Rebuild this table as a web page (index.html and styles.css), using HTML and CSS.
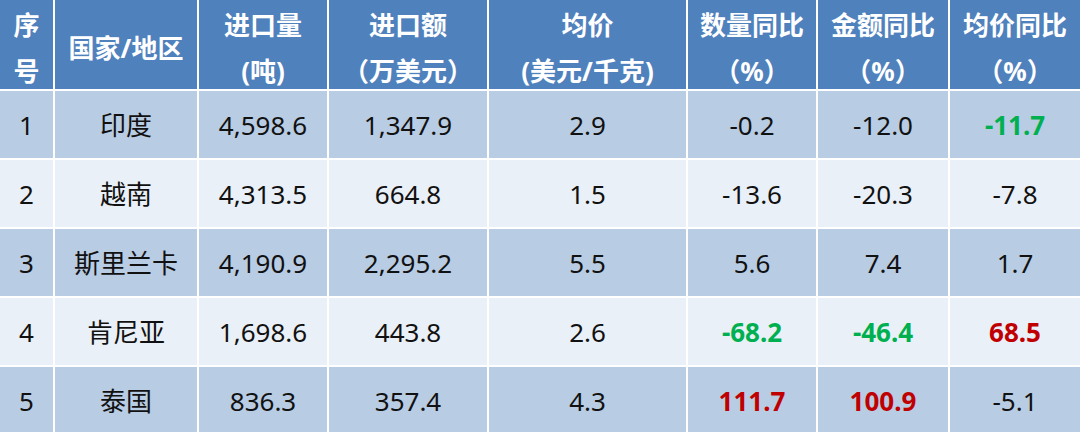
FILE: index.html
```html
<!DOCTYPE html>
<html lang="zh">
<head>
<meta charset="utf-8">
<link rel="stylesheet" href="styles.css">
</head>
<body>
<div class="table">
  <div class="cell head first">序<br>号</div>
  <div class="cell head">国家/地区</div>
  <div class="cell head">进口量<br>(吨)</div>
  <div class="cell head">进口额<br>（万美元）</div>
  <div class="cell head">均价<br>(美元/千克)</div>
  <div class="cell head">数量同比<br>（%）</div>
  <div class="cell head">金额同比<br>（%）</div>
  <div class="cell head">均价同比<br>（%）</div>

  <div class="cell odd first">1</div>
  <div class="cell odd">印度</div>
  <div class="cell odd">4,598.6</div>
  <div class="cell odd">1,347.9</div>
  <div class="cell odd">2.9</div>
  <div class="cell odd">-0.2</div>
  <div class="cell odd">-12.0</div>
  <div class="cell odd green">-11.7</div>

  <div class="cell even first">2</div>
  <div class="cell even">越南</div>
  <div class="cell even">4,313.5</div>
  <div class="cell even">664.8</div>
  <div class="cell even">1.5</div>
  <div class="cell even">-13.6</div>
  <div class="cell even">-20.3</div>
  <div class="cell even">-7.8</div>

  <div class="cell odd first">3</div>
  <div class="cell odd">斯里兰卡</div>
  <div class="cell odd">4,190.9</div>
  <div class="cell odd">2,295.2</div>
  <div class="cell odd">5.5</div>
  <div class="cell odd">5.6</div>
  <div class="cell odd">7.4</div>
  <div class="cell odd">1.7</div>

  <div class="cell even first">4</div>
  <div class="cell even">肯尼亚</div>
  <div class="cell even">1,698.6</div>
  <div class="cell even">443.8</div>
  <div class="cell even">2.6</div>
  <div class="cell even green">-68.2</div>
  <div class="cell even green">-46.4</div>
  <div class="cell even red">68.5</div>

  <div class="cell odd first">5</div>
  <div class="cell odd">泰国</div>
  <div class="cell odd">836.3</div>
  <div class="cell odd">357.4</div>
  <div class="cell odd">4.3</div>
  <div class="cell odd red">111.7</div>
  <div class="cell odd red">100.9</div>
  <div class="cell odd">-5.1</div>
</div>
</body>
</html>
```
FILE: styles.css
```css
html, body {
  margin: 0;
  padding: 0;
  background: #ffffff;
}
body {
  width: 1080px;
  height: 432px;
  overflow: hidden;
  font-family: "Noto Sans", "Noto Sans CJK SC", sans-serif;
}
.table {
  display: grid;
  grid-template-columns: 53px 144px 130px 160px 199px 130px 132px 132px;
  grid-template-rows: 89px repeat(5, 69px);
  width: 1080px;
}
.cell {
  box-sizing: border-box;
  display: flex;
  align-items: center;
  justify-content: center;
  text-align: center;
  border-left: 2px solid #ffffff;
  font-size: 26px;
  color: #111111;
  line-height: 46px;
}
.cell.first {
  border-left: none;
}
.head {
  background: #4f81bd;
  color: #ffffff;
  font-weight: bold;
  padding-top: 6px;
}
.odd, .even {
  border-top: 2px solid #ffffff;
}
.odd {
  background: #b8cce4;
}
.even {
  background: #eaf0f7;
}
.green {
  color: #00b050;
  font-weight: bold;
}
.red {
  color: #c00000;
  font-weight: bold;
}
```
